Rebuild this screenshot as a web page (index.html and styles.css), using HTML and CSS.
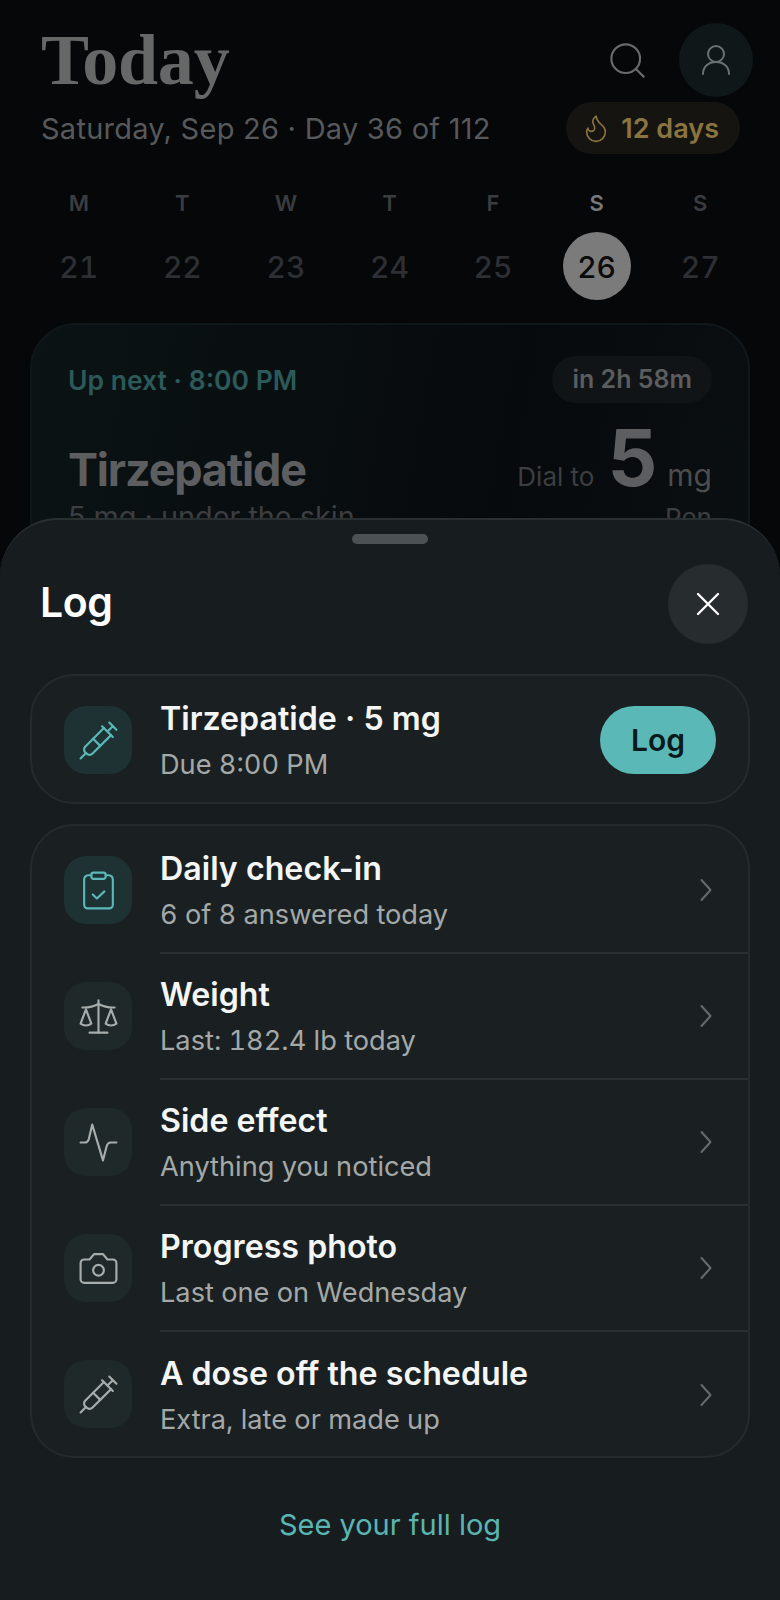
FILE: index.html
```html
<!DOCTYPE html>
<html lang="en">
<head>
<meta charset="utf-8">
<title>Today</title>
<link rel="stylesheet" href="styles.css">
</head>
<body>
<div class="app">
  <main class="today">
    <header class="head">
      <h1 class="title">Today</h1>
      <div class="head-actions">
        <svg class="ic-search" viewBox="0 0 24 24"><circle cx="11" cy="11" r="8"/><path d="m21 21-4.3-4.3"/></svg>
        <div class="avatar"><svg viewBox="0 0 28 30"><circle cx="14" cy="9" r="8"/><path d="M1 29c0-7.500 5.500-12 13-12s13 4.500 13 12"/></svg></div>
      </div>
    </header>
    <div class="subrow">
      <p class="date">Saturday, Sep 26 · Day 36 of 112</p>
      <div class="streak">
        <svg viewBox="0 0 24 24"><path d="M8.500 14.500A2.500 2.500 0 0 0 11 12c0-1.380-.5-2-1-3-1.070-2.140-.22-4.050 2-6 .5 2.500 2 4.900 4 6.500s3 3.500 3 5.500a7 7 0 1 1-14 0c0-1.150.43-2.290 1-3a2.500 2.500 0 0 0 2.500 2.500z"/></svg>
        <span>12 days</span>
      </div>
    </div>
    <div class="week">
      <div class="day"><span class="dow">M</span><span class="num">21</span></div>
      <div class="day"><span class="dow">T</span><span class="num">22</span></div>
      <div class="day"><span class="dow">W</span><span class="num">23</span></div>
      <div class="day"><span class="dow">T</span><span class="num">24</span></div>
      <div class="day"><span class="dow">F</span><span class="num">25</span></div>
      <div class="day is-today"><span class="dow">S</span><span class="num">26</span></div>
      <div class="day"><span class="dow">S</span><span class="num">27</span></div>
    </div>
    <section class="next">
      <div class="next-top">
        <span class="next-when">Up next · 8:00 PM</span>
        <span class="next-in">in 2h 58m</span>
      </div>
      <div class="next-main">
        <span class="next-name">Tirzepatide</span>
        <div class="dial"><span class="dial-label">Dial to</span><span class="dial-num">5</span><span class="dial-unit">mg</span></div>
      </div>
      <div class="next-sub"><span>5 mg · under the skin</span><span class="pen">Pen</span></div>
    </section>
  </main>

  <aside class="sheet">
    <div class="handle"></div>
    <div class="sheet-head">
      <h2 class="sheet-title">Log</h2>
      <button class="close" type="button" aria-label="Close"><svg viewBox="0 0 24 24"><path d="M2 2 22 22M22 2 2 22"/></svg></button>
    </div>

    <div class="group due">
      <div class="tile tile-teal"><svg viewBox="0 0 24 24"><path d="m18 2 4 4"/><path d="m17 7 3-3"/><path d="M19 9 8.700 19.300c-1 1-2.500 1-3.400 0l-.6-.6c-1-1-1-2.500 0-3.400L15 5"/><path d="m9 11 4 4"/><path d="m5 19-3 3"/><path d="m14 4 6 6"/></svg></div>
      <div class="text"><div class="name">Tirzepatide · 5 mg</div><div class="desc">Due 8:00 PM</div></div>
      <button class="log-btn" type="button">Log</button>
    </div>

    <div class="group list">
      <div class="row">
        <div class="tile tile-teal"><svg viewBox="0 0 24 24"><rect x="8" y="2" width="8" height="3.500" rx="1.200"/><path d="M16 3.500h2A2.500 2.500 0 0 1 20 6v14a2 2 0 0 1-2 2H6a2 2 0 0 1-2-2V6a2.500 2.500 0 0 1 2-2.500h2"/><path d="m8.800 14.200 2.300 2.300 4.200-4"/></svg></div>
        <div class="row-body"><div class="text"><div class="name">Daily check-in</div><div class="desc">6 of 8 answered today</div></div><svg class="chev" viewBox="0 0 12 24"><path d="m1.500 2 9 10-9 10"/></svg></div>
      </div>
      <div class="row">
        <div class="tile"><svg viewBox="0 0 24 24"><path d="m16 16 3-8 3 8c-.87.65-1.920 1-3 1s-2.130-.35-3-1Z"/><path d="m2 16 3-8 3 8c-.87.65-1.920 1-3 1s-2.130-.35-3-1Z"/><path d="M7 21h10"/><path d="M12 3v18"/><path d="M3 7h1a17 17 0 0 0 8-2 17 17 0 0 0 8 2h1"/></svg></div>
        <div class="row-body"><div class="text"><div class="name">Weight</div><div class="desc">Last: 182.4 lb today</div></div><svg class="chev" viewBox="0 0 12 24"><path d="m1.500 2 9 10-9 10"/></svg></div>
      </div>
      <div class="row">
        <div class="tile"><svg viewBox="0 0 24 24"><path d="M2 12h2.500c1 0 1.700-.7 2.100-1.900L8.500 2l6 20 2-7.800c.4-1.400 1-2.200 2.200-2.200H22"/></svg></div>
        <div class="row-body"><div class="text"><div class="name">Side effect</div><div class="desc">Anything you noticed</div></div><svg class="chev" viewBox="0 0 12 24"><path d="m1.500 2 9 10-9 10"/></svg></div>
      </div>
      <div class="row">
        <div class="tile"><svg viewBox="0 0 24 24"><path d="M14.500 4h-5L7 7H4a2 2 0 0 0-2 2v9a2 2 0 0 0 2 2h16a2 2 0 0 0 2-2V9a2 2 0 0 0-2-2h-3l-2.500-3z"/><circle cx="12" cy="13" r="3"/></svg></div>
        <div class="row-body"><div class="text"><div class="name">Progress photo</div><div class="desc">Last one on Wednesday</div></div><svg class="chev" viewBox="0 0 12 24"><path d="m1.500 2 9 10-9 10"/></svg></div>
      </div>
      <div class="row">
        <div class="tile"><svg viewBox="0 0 24 24"><path d="m18 2 4 4"/><path d="m17 7 3-3"/><path d="M19 9 8.700 19.300c-1 1-2.500 1-3.400 0l-.6-.6c-1-1-1-2.500 0-3.400L15 5"/><path d="m9 11 4 4"/><path d="m5 19-3 3"/><path d="m14 4 6 6"/></svg></div>
        <div class="row-body"><div class="text"><div class="name">A dose off the schedule</div><div class="desc">Extra, late or made up</div></div><svg class="chev" viewBox="0 0 12 24"><path d="m1.500 2 9 10-9 10"/></svg></div>
      </div>
    </div>

    <a class="full-log">See your full log</a>
  </aside>
</div>
</body>
</html>
```
FILE: styles.css
```css
* { box-sizing: border-box; }
html, body { margin: 0; padding: 0; background: #050709; }
body { font-family: Inter, "Noto Sans", sans-serif; }
h1, h2, p { margin: 0; }
svg { display: block; fill: none; stroke: currentColor; stroke-linecap: round; stroke-linejoin: round; stroke-width: 1.6; }

.app { position: relative; width: 780px; height: 1600px; overflow: hidden; }

.today { height: 1600px; background: #050709; padding-top: 23px; }
.head { display: flex; justify-content: space-between; align-items: center; height: 74px; padding: 0 27px 0 41px; }
.title { font-family: "Liberation Serif", serif; font-size: 72px; line-height: 74px; font-weight: 700; letter-spacing: -.2px; color: #666868; }
.head-actions { display: flex; align-items: center; gap: 30px; }
.ic-search { width: 43px; height: 43px; color: #686a6c; stroke-width: 1.200; }
.avatar { width: 74px; height: 74px; border-radius: 50%; background: #0f1719; color: #6c7072; display: flex; align-items: center; justify-content: center; }
.avatar svg { width: 28px; height: 30px; stroke-width: 2; }

.subrow { display: flex; justify-content: space-between; align-items: center; height: 52px; margin-top: 5px; padding: 0 40px 0 41px; }
.date { font-size: 29px; letter-spacing: .25px; color: #57595a; }
.streak { display: flex; align-items: center; gap: 9px; height: 52px; padding: 0 21px 0 14px; border-radius: 26px; background: #151410; color: #8a7440; font-size: 27px; font-weight: 600; }
.streak svg { width: 32px; height: 32px; stroke-width: 1.200; }

.week { display: grid; grid-template-columns: repeat(7, 1fr); margin-top: 34px; padding: 0 28px 0 27px; }
.day { display: flex; flex-direction: column; align-items: center; gap: 14px; color: #3a3c3f; }
.dow { font-size: 22px; line-height: 30px; font-weight: 600; }
.num { display: flex; align-items: center; justify-content: center; width: 68px; height: 68px; padding-top: 2px; border-radius: 50%; font-size: 30px; font-weight: 500; font-variant-numeric: tabular-nums; color: #2d2f33; }
.is-today .dow { color: #75777a; }
.is-today .num { background: #7b7b7b; color: #0a0a0a; }

.next { margin: 23px 30px 0; height: 300px; padding: 31px 36px; border-radius: 46px; border: 2px solid #10171a; background: linear-gradient(100deg, #0b1315, #070a0c 65%, #0a0f11); }
.next-top { display: flex; justify-content: space-between; align-items: center; }
.next-when { font-size: 26.500px; font-weight: 600; color: #2b5a58; }
.next-in { height: 47px; line-height: 47px; padding: 0 20px; border-radius: 24px; background: #101416; color: #5b5d5e; font-size: 25px; font-weight: 600; }
.next-main { display: flex; justify-content: space-between; align-items: baseline; margin-top: 15px; }
.next-name { font-size: 45px; font-weight: 700; letter-spacing: -1.200px; color: #5c5e60; }
.dial { display: flex; align-items: baseline; gap: 10px; }
.dial-label { font-size: 26px; margin-right: 3px; color: #3c3f41; }
.dial-num { font-size: 78px; font-weight: 700; line-height: 80px; color: #5c5e60; }
.dial-unit { font-size: 30px; color: #4b4d4e; }
.next-sub { display: flex; justify-content: space-between; align-items: baseline; font-size: 28.800px; color: #3c3e40; margin-top: 1px; }
.pen { font-size: 26px; }

.sheet { position: absolute; left: 0; right: 0; top: 518px; bottom: 0; padding: 0 30px; border-radius: 58px 58px 0 0; border-top: 2px solid #2a3032; background: #171d1f; }
.handle { width: 76px; height: 10px; margin: 14px auto 0; border-radius: 5px; background: #4c5254; }
.sheet-head { display: flex; justify-content: space-between; align-items: center; height: 80px; margin-top: 20px; padding-left: 10px; }
.sheet-title { font-size: 41px; line-height: 48px; margin-top: -4px; font-weight: 600; letter-spacing: -.5px; color: #fff; }
.close { display: flex; align-items: center; justify-content: center; width: 80px; height: 80px; margin-right: 2px; padding: 0; border: 0; border-radius: 50%; background: #272c2f; color: #fff; }
.close svg { width: 24px; height: 24px; stroke-width: 2.300; }

.group { border: 2px solid #252b2d; border-radius: 44px; background: #1a2022; }
.due { display: flex; align-items: center; height: 130px; margin-top: 30px; padding: 2px 32px 0; }
.list { margin-top: 20px; height: 634px; padding-top: 2px; }
.tile { display: flex; align-items: center; justify-content: center; flex: none; width: 68px; height: 68px; border-radius: 22px; background: #1f2929; color: #a7adab; }
.row .tile { margin-top: -2px; }
.tile svg { width: 43px; height: 43px; stroke-width: 1.200; }
.tile-teal { background: #1e3234; color: #5ab9b7; }
.text { flex: 1; margin-left: 28px; padding-top: 1px; }
.row-body .text { margin-left: 0; }
.name { font-size: 32.200px; line-height: 40px; font-weight: 600; color: #f4f6f5; }
.desc { font-size: 27.200px; line-height: 36px; margin-top: 8px; font-variant-numeric: tabular-nums; color: #a4a9a8; }
.log-btn { width: 116px; height: 68px; padding: 0; border: 0; border-radius: 34px; background: #5ab9b7; color: #0a1a1c; font: 600 30px Inter, sans-serif; }

.row { display: flex; align-items: center; height: 126px; padding-left: 32px; }
.row-body { display: flex; align-items: center; align-self: stretch; flex: 1; margin-left: 28px; padding-right: 36px; border-bottom: 2px solid #2a3032; }
.row:last-child .row-body { border-bottom: 0; }
.chev { width: 12px; height: 24px; color: #666c6c; stroke-width: 2; }

.full-log { display: block; margin-top: 47px; text-align: center; font-size: 29px; line-height: 40px; font-weight: 400; color: #5ab5b2; }
```
